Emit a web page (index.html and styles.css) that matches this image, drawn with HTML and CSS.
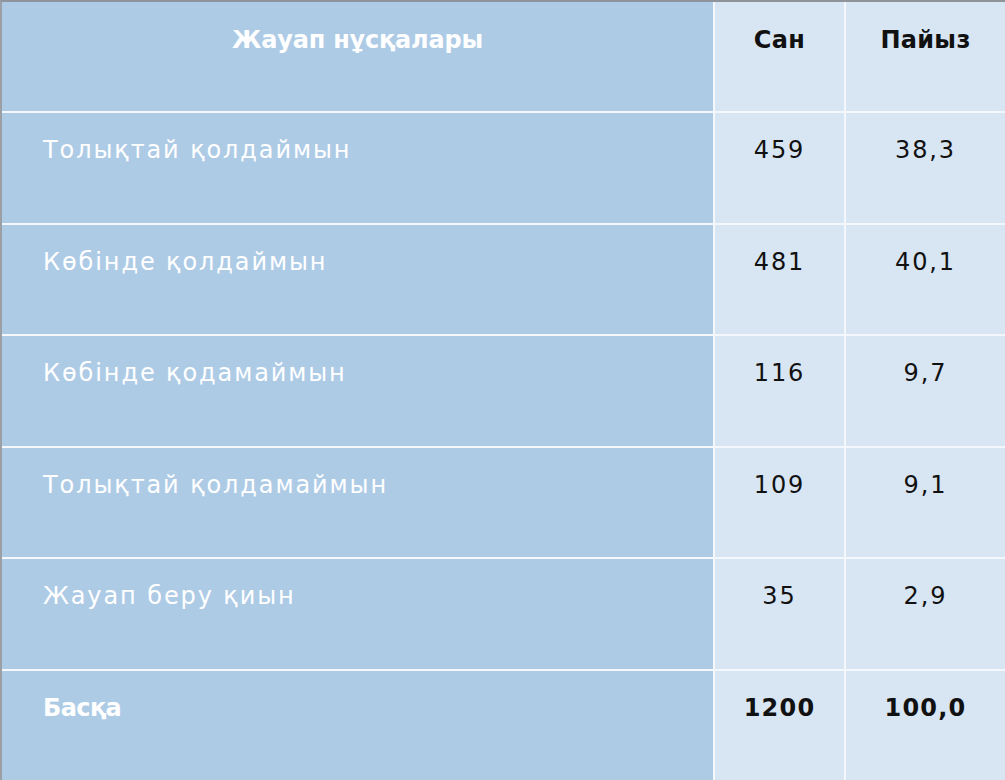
FILE: index.html
```html
<!DOCTYPE html>
<html lang="kk">
<head>
<meta charset="utf-8">
<title>Жауап нұсқалары</title>
<link rel="stylesheet" href="styles.css">
</head>
<body>
<div class="table">
  <div class="cell label head">Жауап нұсқалары</div>
  <div class="cell num head">Сан</div>
  <div class="cell num head">Пайыз</div>

  <div class="cell label">Толықтай қолдаймын</div>
  <div class="cell num">459</div>
  <div class="cell num">38,3</div>

  <div class="cell label">Көбінде қолдаймын</div>
  <div class="cell num">481</div>
  <div class="cell num">40,1</div>

  <div class="cell label">Көбінде қодамаймын</div>
  <div class="cell num">116</div>
  <div class="cell num">9,7</div>

  <div class="cell label">Толықтай қолдамаймын</div>
  <div class="cell num">109</div>
  <div class="cell num">9,1</div>

  <div class="cell label">Жауап беру қиын</div>
  <div class="cell num">35</div>
  <div class="cell num">2,9</div>

  <div class="cell label total">Басқа</div>
  <div class="cell num total">1200</div>
  <div class="cell num total">100,0</div>
</div>
</body>
</html>
```
FILE: styles.css
```css
html, body {
  margin: 0;
  padding: 0;
  height: 100%;
  background: #ffffff;
}
body {
  font-family: "DejaVu Sans", "Liberation Sans", sans-serif;
  overflow: hidden;
}
.table {
  box-sizing: border-box;
  height: 780px;
  width: 1005px;
  display: grid;
  grid-template-columns: 711px 129px 1fr;
  grid-template-rows: repeat(7, 1fr);
  gap: 2px;
  background: #f4f8fc;
  border-top: 2px solid #8e9499;
  border-left: 2px solid #9aa0a5;
}
.cell {
  padding-top: 23px;
  font-size: 24px;
  line-height: 28px;
  letter-spacing: 1.9px;
}
.label {
  background: #aecbe6;
  color: #ffffff;
  padding-left: 41px;
}
.num {
  background: #d8e5f3;
  color: #111111;
  text-align: center;
}
.head {
  font-weight: bold;
  letter-spacing: 0.3px;
  padding-top: 24px;
}
.label.head {
  text-align: center;
  padding-left: 0;
  letter-spacing: -0.2px;
}
.total {
  font-weight: bold;
  letter-spacing: 1.2px;
}
.label.total {
  letter-spacing: -0.6px;
}
```
